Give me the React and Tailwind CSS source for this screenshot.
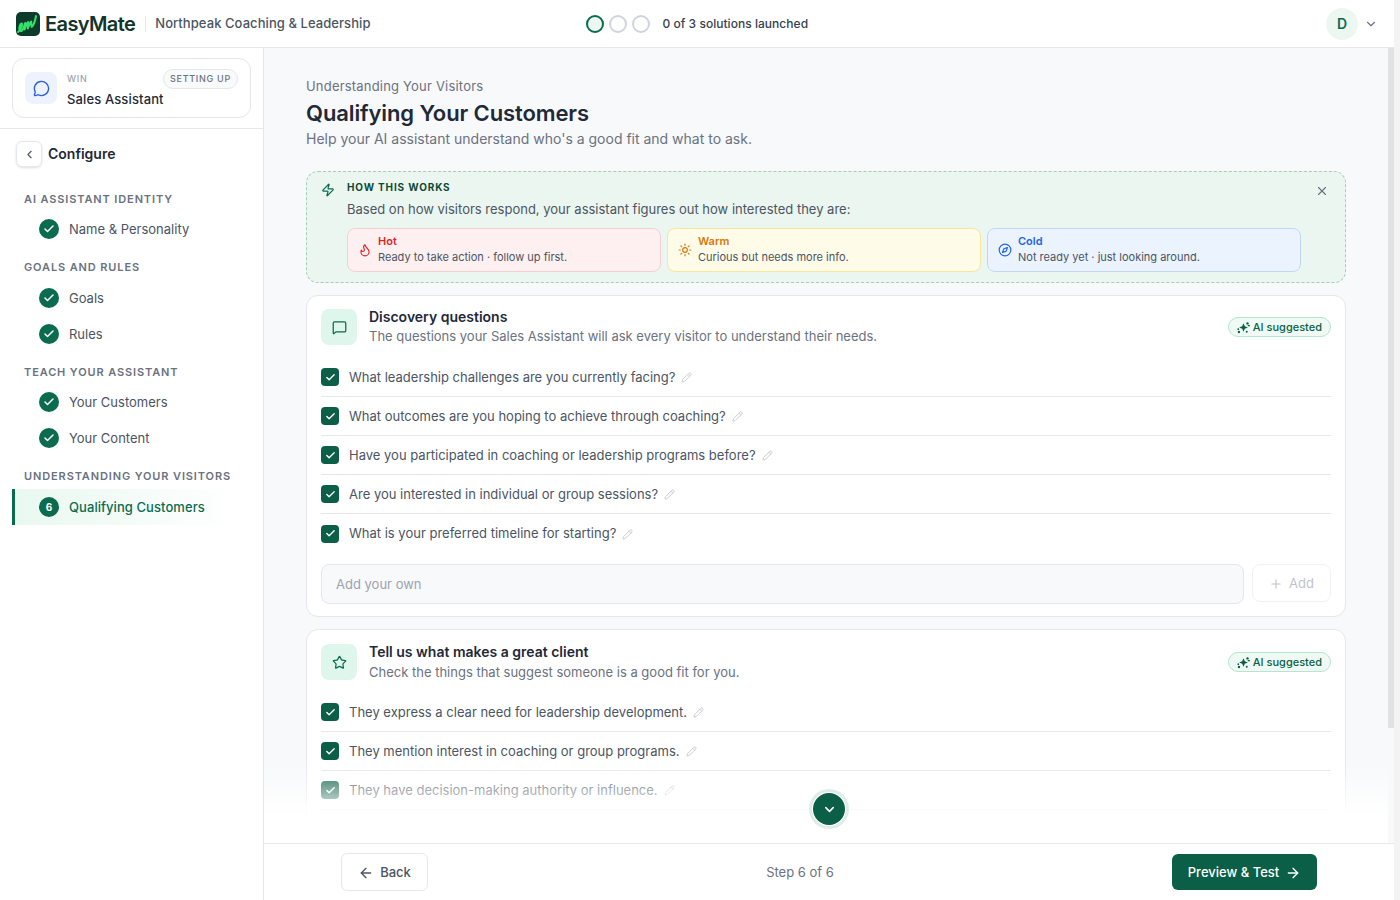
import { Check, ChevronDown, ChevronLeft, Compass, Flame, MessageCircle, MessageSquare, Pencil, Plus, Star, Sun, X, Zap, ArrowLeft, ArrowRight } from "lucide-react"

const Logo = () => (
  <svg width="24" height="24" viewBox="0 0 24 24" className="shrink-0">
    <rect width="24" height="24" rx="5" fill="#0c3b2b" />
    <path d="M2 20c2.500-2 4.500-6 4-8-.6-1.500-2.500 1-2.700 4-.2 3 1.700 4.500 3.500 1.500 1-1.700 1.700-5 2.400-6.500-.2 2-.6 4.500-.6 6.500 1-3 2.300-6.500 3.500-7.500.4 2-.4 4.500-.3 6.500 1-3 2.300-6 3.400-7 .2 2-.3 4.500.5 5.500 1.700-1.500 3.500-6.500 4.300-11" fill="none" stroke="#35e06a" strokeWidth="2" strokeLinecap="round" strokeLinejoin="round" />
  </svg>
)

const SparkCluster = () => (
  <svg width="13" height="13" viewBox="0 0 12 12" fill="#0b5f46" className="shrink-0">
    <path d="M6 2 7.200 4.800 10 6 7.200 7.200 6 10 4.800 7.200 2 6 4.800 4.800z" />
    <circle cx="9.700" cy="2.200" r="1.100" />
    <rect x="9.800" y="3.800" width="2.200" height="1.100" rx=".5" />
    <circle cx="1.800" cy="10.200" r="1.100" />
    <circle cx="1.200" cy="7.500" r=".8" />
    <circle cx="9" cy="10" r=".9" />
  </svg>
)

const DoneDot = () => (
  <span className="w-5 h-5 rounded-full bg-[#0b6b4f] flex items-center justify-center shrink-0">
    <Check size={12} strokeWidth={3} className="text-white" />
  </span>
)

const NavHead = ({ children, className }) => (
  <div className={"pl-6 text-[11px] leading-4 font-semibold tracking-[0.08em] text-[#6b7280] " + className}>{children}</div>
)

const NavItem = ({ label }) => (
  <div className="h-9 pl-[39px] flex items-center gap-[10px] text-[13px] text-[#4b5563]">
    <DoneDot />
    <span className="pt-px">{label}</span>
  </div>
)

const Tile = ({ icon, title, text, box, color }) => (
  <div className={"flex-1 h-[44px] rounded-lg border flex items-center pl-[10px] gap-[6px] " + box}>
    {icon}
    <div className="flex flex-col pb-[2px]">
      <span className={"text-[11px] leading-4 font-semibold " + color}>{title}</span>
      <span className="text-[11px] leading-4 text-[#4b5563]">{text}</span>
    </div>
  </div>
)

const Question = ({ text, last }) => (
  <div className={"h-[39px] flex items-center gap-[10px] " + (last ? "" : "border-b border-[#e5e7eb]")}>
    <span className="w-[18px] h-[18px] rounded bg-[#0b5f46] flex items-center justify-center shrink-0">
      <Check size={11} strokeWidth={3} className="text-white" />
    </span>
    <span className="pt-px flex items-center gap-[6px] text-[13px] text-[#4b5563]">
      {text}
      <Pencil size={11} className="text-[#c4c9d1]" />
    </span>
  </div>
)

const CardHead = ({ icon, title, text, titleGap }) => (
  <div className="h-9 flex items-center gap-3">
    <div className="w-9 h-9 rounded-lg bg-[#dff6ec] flex items-center justify-center shrink-0">{icon}</div>
    <div className="flex-1 flex flex-col">
      <span className={"text-[14px] leading-[18px] font-semibold text-[#1f2937] " + titleGap}>{title}</span>
      <span className="text-[13px] leading-[19px] text-[#6b7280]">{text}</span>
    </div>
    <div className="h-5 px-2 rounded-full border border-[#b5e5d0] bg-[#effaf5] flex items-center gap-[3px] text-[11px] font-medium text-[#0b5f46]">
      <SparkCluster />
      AI suggested
    </div>
  </div>
)

export default function App() {
  return (
    <div className="w-full h-screen flex overflow-hidden bg-[#f3f3f4] font-['Inter',sans-serif]">
      <div className="w-[1394px] shrink-0 flex flex-col bg-white">
        <header className="h-12 shrink-0 border-b border-[#e5e7eb] flex items-center pl-4 pr-[16px]">
          <Logo />
          <span className="ml-[5px] text-[20px] font-semibold tracking-[-0.03em] text-[#12352a]">EasyMate</span>
          <span className="ml-[10px] w-px h-4 bg-[#e5e7eb]"></span>
          <span className="ml-[9px] pt-px text-[13px] tracking-[0.005em] font-medium text-[#4b5563]">Northpeak Coaching &amp; Leadership</span>
          <div className="ml-[216px] flex items-center gap-[5px]">
            <span className="w-[18px] h-[18px] rounded-full border-2 border-[#0b6b4f] bg-[#ecf7f1]"></span>
            <span className="w-[18px] h-[18px] rounded-full border-2 border-[#d1d5db]"></span>
            <span className="w-[18px] h-[18px] rounded-full border-2 border-[#d1d5db]"></span>
          </div>
          <span className="ml-[12px] text-[12px] tracking-[0.003em] font-medium text-[#374151]">0 of 3 solutions launched</span>
          <div className="ml-auto flex items-center gap-[6px]">
            <span className="w-8 h-8 rounded-full bg-[#ecf7f1] flex items-center justify-center text-[14px] font-semibold text-[#0b6b4f]">D</span>
            <ChevronDown size={14} className="text-[#6b7280]" />
          </div>
        </header>

        <div className="flex-1 min-h-0 flex">
          <aside className="w-[264px] shrink-0 border-r border-[#e5e7eb] flex flex-col">
            <div className="h-[81px] shrink-0 border-b border-[#e5e7eb] px-3 pt-[10px]">
              <div className="h-[60px] border border-[#e5e7eb] rounded-xl flex items-center pl-3 pr-3 gap-[10px]">
                <span className="w-8 h-8 rounded-lg bg-[#edf2fd] flex items-center justify-center shrink-0">
                  <MessageCircle size={17} className="text-[#2f62d9]" />
                </span>
                <div className="flex-1 flex flex-col pt-[2px]">
                  <div className="h-[20px] flex items-center justify-between">
                    <span className="text-[9px] font-medium tracking-[0.08em] text-[#9ca3af]">WIN</span>
                    <span className="h-5 px-[6px] rounded-full border border-[#e5e7eb] bg-[#f9fafb] flex items-center text-[9px] font-medium tracking-[0.08em] text-[#6b7280]">SETTING UP</span>
                  </div>
                  <span className="text-[13px] leading-5 tracking-[0.01em] font-medium text-[#1f2937]">Sales Assistant</span>
                </div>
              </div>
            </div>
            <div className="pl-4 mt-[12px] flex items-center gap-[6px]">
              <span className="w-[26px] h-[26px] rounded-md border border-[#e5e7eb] shadow-sm flex items-center justify-center">
                <ChevronLeft size={13} className="text-[#4b5563]" />
              </span>
              <span className="text-[14px] leading-4 font-semibold text-[#1f2937]">Configure</span>
            </div>
            <NavHead className="mt-[24px]">AI ASSISTANT IDENTITY</NavHead>
            <div className="mt-[4px]"><NavItem label="Name & Personality" /></div>
            <NavHead className="mt-[12px]">GOALS AND RULES</NavHead>
            <div className="mt-[5px]">
              <NavItem label="Goals" />
              <NavItem label="Rules" />
            </div>
            <NavHead className="mt-[12px]">TEACH YOUR ASSISTANT</NavHead>
            <div className="mt-[4px]">
              <NavItem label="Your Customers" />
              <NavItem label="Your Content" />
            </div>
            <NavHead className="mt-[12px]">UNDERSTANDING YOUR VISITORS</NavHead>
            <div className="mt-[5px] ml-3 w-[228px] h-9 pl-[24px] border-l-[3px] border-[#0b6b4f] bg-gradient-to-r from-[#e9f8f1] to-white flex items-center gap-[10px]">
              <span className="w-5 h-5 rounded-full bg-[#0b6b4f] flex items-center justify-center text-[10px] font-bold text-white shrink-0">6</span>
              <span className="pt-px text-[13px] tracking-[0.005em] font-medium text-[#0b6b4f]">Qualifying Customers</span>
            </div>
          </aside>

          <div className="flex-1 min-w-0 flex flex-col">
            <div className="flex-1 min-h-0 flex bg-[#f8f9fb] relative">
              <main className="flex-1 min-w-0 overflow-hidden pl-[42px] pr-[42px] pt-[30px]">
                <div className="text-[13px] leading-4 tracking-[0.015em] text-[#6b7280]">Understanding Your Visitors</div>
                <h1 className="mt-[4px] text-[22px] leading-[30px] tracking-[-0.005em] font-semibold text-[#1f2937]">Qualifying Your Customers</h1>
                <p className="mt-[1px] text-[14px] leading-5 text-[#6b7280]">Help your AI assistant understand who's a good fit and what to ask.</p>

                <div className="mt-[22px] h-[112px] rounded-xl border border-dashed border-[#a3cdb8] bg-[#ebf6f0] pl-[14px] pr-[16px] pt-[7px] flex gap-[12px]">
                  <Zap size={14} className="mt-[4px] text-[#0b6b4f] shrink-0" />
                  <div className="flex-1 min-w-0">
                    <div className="text-[10px] leading-4 font-bold tracking-[0.085em] text-[#0c4a36]">HOW THIS WORKS</div>
                    <div className="mt-[4px] text-[13px] leading-5 text-[#4b5563]">Based on how visitors respond, your assistant figures out how interested they are:</div>
                    <div className="mt-[9px] mr-[2px] flex gap-[6px]">
                      <Tile icon={<Flame size={14} className="text-[#dc2626] shrink-0" />} title="Hot" text="Ready to take action · follow up first." box="bg-[#fef0f0] border-[#f5d0d0]" color="text-[#dc2626]" />
                      <Tile icon={<Sun size={14} className="text-[#d97706] shrink-0" />} title="Warm" text="Curious but needs more info." box="bg-[#fefbe8] border-[#f8e69a]" color="text-[#d97706]" />
                      <Tile icon={<Compass size={14} className="text-[#2563eb] shrink-0" />} title="Cold" text="Not ready yet · just looking around." box="bg-[#eaf3fe] border-[#bfd8f5]" color="text-[#2563eb]" />
                    </div>
                  </div>
                  <X size={14} className="mt-[5px] text-[#6b7280] shrink-0" />
                </div>

                <section className="mt-3 rounded-xl border border-[#e5e7eb] bg-white px-[14px] pt-[13px] pb-3">
                  <CardHead
                    icon={<MessageSquare size={15} className="text-[#0b6b4f]" />}
                    title="Discovery questions"
                    text="The questions your Sales Assistant will ask every visitor to understand their needs."
                    titleGap="mb-px"
                  />
                  <div className="mt-[13px]">
                    <Question text="What leadership challenges are you currently facing?" />
                    <Question text="What outcomes are you hoping to achieve through coaching?" />
                    <Question text="Have you participated in coaching or leadership programs before?" />
                    <Question text="Are you interested in individual or group sessions?" />
                    <Question text="What is your preferred timeline for starting?" last />
                  </div>
                  <div className="mt-[11px] flex gap-2">
                    <div className="flex-1 h-10 pt-px rounded-lg border border-[#e5e7eb] bg-[#f8f9fb] pl-[14px] flex items-center text-[13px] text-[#9ca3af]">Add your own</div>
                    <div className="w-[79px] h-[38px] pt-px rounded-lg border border-[#f0f1f3] flex items-center justify-center gap-[6px] text-[13px] text-[#bfc4cc]">
                      <Plus size={14} />
                      Add
                    </div>
                  </div>
                </section>

                <section className="mt-3 rounded-xl border border-[#e5e7eb] bg-white px-[14px] pt-[14px] pb-3">
                  <CardHead
                    icon={<Star size={15} className="text-[#0b6b4f]" />}
                    title="Tell us what makes a great client"
                    text="Check the things that suggest someone is a good fit for you."
                    titleGap="mb-[2px]"
                  />
                  <div className="mt-[13px]">
                    <Question text="They express a clear need for leadership development." />
                    <Question text="They mention interest in coaching or group programs." />
                    <Question text="They have decision-making authority or influence." />
                    <Question text="They are ready to start within the next few months." />
                  </div>
                </section>
              </main>
              <div className="w-[6px] shrink-0 self-start h-[680px] bg-[#e2e2e2]"></div>

              <div className="absolute left-0 right-[6px] bottom-0 h-[80px] bg-gradient-to-t from-white from-[32%] to-transparent pointer-events-none"></div>
              <div className="absolute left-[549px] top-[745px] w-8 h-8 rounded-full bg-[#0b5f46] shadow-[0_0_0_1px_#ffffff,0_0_0_4px_#dfece7] flex items-center justify-center">
                <ChevronDown size={15} strokeWidth={2.500} className="text-white" />
              </div>
            </div>

            <footer className="h-[57px] shrink-0 border-t border-[#e5e7eb] bg-white px-[77px] flex items-center justify-between">
              <div className="w-[87px] h-[38px] pt-px rounded-md border border-[#e5e7eb] flex items-center justify-center gap-[6px] text-[13px] font-medium text-[#4b5563]">
                <ArrowLeft size={16} />
                Back
              </div>
              <span className="pt-px text-[13px] text-[#6b7280]">Step 6 of 6</span>
              <div className="w-[145px] h-9 pt-px rounded-md bg-[#0b5f46] flex items-center justify-center gap-[6px] text-[13px] font-medium text-white">
                Preview &amp; Test
                <ArrowRight size={16} />
              </div>
            </footer>
          </div>
        </div>
      </div>
      <div className="flex-1"></div>
    </div>
  )
}
